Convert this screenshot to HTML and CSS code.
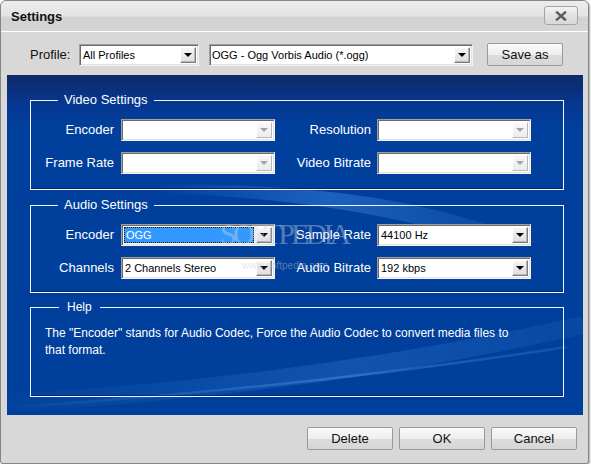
FILE: index.html
```html
<!DOCTYPE html>
<html>
<head>
<meta charset="utf-8">
<title>Settings</title>
<link rel="stylesheet" href="styles.css">
</head>
<body>
<div class="window">
  <div class="titlebar">
    <span class="title">Settings</span>
    <div class="close">
      <svg width="12" height="10" viewBox="0 0 12 10"><path d="M2 1.5 L10 8.5 M10 1.5 L2 8.5" stroke="#6d5656" stroke-width="2.4" stroke-linecap="square"/></svg>
    </div>
  </div>

  <div class="profile-row">
    <span class="plabel">Profile:</span>
    <div class="combo profile-all"><span class="val">All Profiles</span><span class="arrow"></span></div>
    <div class="combo profile-fmt"><span class="val">OGG - Ogg Vorbis Audio (*.ogg)</span><span class="arrow"></span></div>
    <div class="btn save">Save as</div>
  </div>

  <div class="panel">
    <svg class="swoosh" width="576" height="340" viewBox="0 0 576 340">
      <defs>
        <linearGradient id="g1" x1="0" y1="0" x2="1" y2="0">
          <stop offset="0" stop-color="#3f8ae6" stop-opacity="0"/>
          <stop offset="0.45" stop-color="#3f8ae6" stop-opacity="0.45"/>
          <stop offset="1" stop-color="#3f8ae6" stop-opacity="0.05"/>
        </linearGradient>
        <linearGradient id="g2" x1="0" y1="0" x2="1" y2="0">
          <stop offset="0" stop-color="#4a94ea" stop-opacity="0.05"/>
          <stop offset="0.6" stop-color="#4a94ea" stop-opacity="0.45"/>
          <stop offset="1" stop-color="#4a94ea" stop-opacity="0.2"/>
        </linearGradient>
      </defs>
      <path d="M150 110 C 300 108 420 122 530 168 L 480 168 C 380 138 280 122 150 118 Z" fill="url(#g1)"/>
      <path d="M0 328 Q 300 312 576 250" stroke="url(#g2)" stroke-width="18" fill="none" opacity="0.5"/>
      <path d="M10 332 Q 300 312 560 272" stroke="url(#g2)" stroke-width="2.5" fill="none"/>
    </svg>

    <fieldset class="group video">
      <legend>Video Settings</legend>
      <div class="grid">
        <span class="lbl">Encoder</span>
        <div class="combo disabled"><span class="arrow"></span></div>
        <span class="lbl">Resolution</span>
        <div class="combo disabled"><span class="arrow"></span></div>
        <span class="lbl">Frame Rate</span>
        <div class="combo disabled"><span class="arrow"></span></div>
        <span class="lbl">Video Bitrate</span>
        <div class="combo disabled"><span class="arrow"></span></div>
      </div>
    </fieldset>

    <fieldset class="group audio">
      <legend>Audio Settings</legend>
      <div class="grid">
        <span class="lbl">Encoder</span>
        <div class="combo"><span class="sel">OGG</span><span class="arrow"></span></div>
        <span class="lbl">Sample Rate</span>
        <div class="combo"><span class="val">44100 Hz</span><span class="arrow"></span></div>
        <span class="lbl">Channels</span>
        <div class="combo"><span class="val">2 Channels Stereo</span><span class="arrow"></span></div>
        <span class="lbl">Audio Bitrate</span>
        <div class="combo"><span class="val">192 kbps</span><span class="arrow"></span></div>
      </div>
    </fieldset>

    <fieldset class="group help">
      <legend>Help</legend>
      <div class="helptext">The "Encoder" stands for Audio Codec, Force the Audio Codec to convert media files to<br>that format.</div>
    </fieldset>

    <div class="wm-big">SOFTPEDIA</div>
    <div class="wm-small">www.softpedia.com</div>
  </div>

  <div class="buttons">
    <div class="btn">Delete</div>
    <div class="btn">OK</div>
    <div class="btn">Cancel</div>
  </div>
</div>
</body>
</html>
```

FILE: styles.css
```css
html, body {
  margin: 0;
  padding: 0;
  background: #ffffff;
}

body {
  font-family: "Liberation Sans", Arial, sans-serif;
}

.window {
  width: 589px;
  height: 464px;
  box-sizing: border-box;
  border: 1px solid #858585;
  border-radius: 6px 6px 3px 3px;
  background: #d8d8d8;
  box-shadow: 1px 1px 2px rgba(0, 0, 0, 0.35);
  overflow: hidden;
  position: relative;
}

.titlebar {
  height: 30px;
  border-bottom: 1px solid #ffffff;
  background: linear-gradient(#ececec 0, #e4e4e4 15px, #d2d2d2 16px, #d5d5d5 30px);
  display: flex;
  justify-content: space-between;
  align-items: flex-start;
}

.title {
  font-weight: bold;
  font-size: 13px;
  line-height: 31px;
  padding-left: 10px;
  color: #111;
}

.close {
  width: 34px;
  height: 19px;
  box-sizing: border-box;
  margin: 5px 10px 0 0;
  border: 1px solid #a4a4a4;
  border-radius: 3px;
  background: linear-gradient(#f4f4f4, #e2e2e2 50%, #d8d8d8);
  display: flex;
  align-items: center;
  justify-content: center;
}

.profile-row {
  height: 43px;
  box-sizing: border-box;
  padding: 12px 0 0 29px;
  display: flex;
  align-items: flex-start;
}

.plabel {
  width: 49px;
  font-size: 13px;
  line-height: 22px;
  color: #111;
}

.combo {
  position: relative;
  height: 22px;
  box-sizing: border-box;
  background: #ffffff;
  border: 1px solid;
  border-color: #a0a0a0 #f4f4f4 #f4f4f4 #a0a0a0;
  box-shadow: inset 1px 1px 0 #6a6a6a, inset -1px -1px 0 #e2e2e2;
  font-size: 11px;
  line-height: 20px;
  color: #000;
  padding-left: 3px;
  white-space: nowrap;
}

.profile-all {
  width: 120px;
}

.profile-fmt {
  width: 264px;
  margin-left: 10px;
  padding-left: 2px;
}

.arrow {
  position: absolute;
  right: 2px;
  top: 2px;
  width: 16px;
  height: 16px;
  box-sizing: border-box;
  background: linear-gradient(#f6f6f6, #dedede);
  border: 1px solid;
  border-color: #ffffff #7c7c7c #7c7c7c #ffffff;
  box-shadow: inset -1px -1px 0 #b8b8b8;
}

.arrow::after {
  content: "";
  position: absolute;
  left: 3px;
  top: 5px;
  border-top: 4px solid #000;
  border-left: 4px solid transparent;
  border-right: 4px solid transparent;
}

.combo.disabled .arrow {
  background: linear-gradient(#f8f8f8, #ececec);
  border-color: #ffffff #b8b8b8 #b8b8b8 #ffffff;
  box-shadow: none;
}

.combo.disabled .arrow::after {
  border-top-color: #a6a6a6;
}

.sel {
  position: absolute;
  left: 2px;
  top: 2px;
  bottom: 2px;
  right: 20px;
  background: #3399ff;
  outline: 1px dotted #1a1a1a;
  outline-offset: -1px;
  color: #fff;
  line-height: 16px;
  padding-left: 2px;
  font-size: 11px;
}

.btn {
  height: 23px;
  box-sizing: border-box;
  border: 1px solid #9a9a9a;
  border-radius: 2px;
  background: linear-gradient(#fafafa 0, #eeeeee 50%, #dddddd 51%, #d6d6d6 100%);
  font-size: 13px;
  line-height: 21px;
  text-align: center;
  color: #111;
}

.save {
  width: 76px;
  margin-left: 14px;
  margin-top: -1px;
}

.panel {
  position: relative;
  width: 576px;
  height: 340px;
  box-sizing: border-box;
  margin-left: 6px;
  padding-top: 18px;
  background: linear-gradient(180deg, #0c2a66 0px, #0a3180 16px, #053994 32px, #00409c 55px, #00409c 100%);
  overflow: hidden;
}

.swoosh {
  position: absolute;
  left: 0;
  top: 0;
  z-index: 0;
}

.group {
  position: relative;
  z-index: 1;
  margin: 0 0 0 23px;
  width: 534px;
  box-sizing: border-box;
  border: 1px solid #f2f5fb;
  box-shadow: inset 0 -1px 0 rgba(0, 10, 40, 0.45);
  min-width: 0;
  padding: 12px 0 15px;
}

.group legend {
  margin-left: 27px;
  padding: 0 6px;
  font-size: 13px;
  line-height: 14px;
  color: #ffffff;
}

.audio {
  margin-top: 8px;
  padding: 12px 0 13px;
}

.help {
  margin-top: 7px;
  padding: 11px 0 37px;
}

.help legend {
  margin-left: 28px;
  padding: 0 8px;
  font-size: 12px;
}

.grid {
  display: grid;
  grid-template-columns: 90px 154px 102px 154px;
  grid-auto-rows: 22px;
  row-gap: 11px;
  align-items: center;
}

.lbl {
  text-align: right;
  font-size: 13px;
  line-height: 16px;
  color: #ffffff;
  padding-right: 7px;
  white-space: nowrap;
}

.grid .lbl:nth-child(4n+3) {
  padding-right: 6px;
}

.helptext {
  padding-left: 14px;
  font-size: 12px;
  line-height: 17px;
  color: #ffffff;
  white-space: nowrap;
}

.wm-big {
  position: absolute;
  z-index: 2;
  left: 213px;
  top: 143px;
  font-family: "Liberation Serif", "Times New Roman", serif;
  font-size: 30px;
  line-height: 32px;
  letter-spacing: -3.8px;
  color: rgba(205, 210, 225, 0.42);
  pointer-events: none;
}

.wm-small {
  position: absolute;
  z-index: 2;
  left: 235px;
  top: 184px;
  font-size: 10px;
  line-height: 14px;
  color: rgba(190, 195, 210, 0.45);
  pointer-events: none;
}

.buttons {
  height: 48px;
  box-sizing: border-box;
  padding: 12px 11px 0 0;
  display: flex;
  justify-content: flex-end;
  gap: 6px;
}

.buttons .btn {
  width: 86px;
}
```
